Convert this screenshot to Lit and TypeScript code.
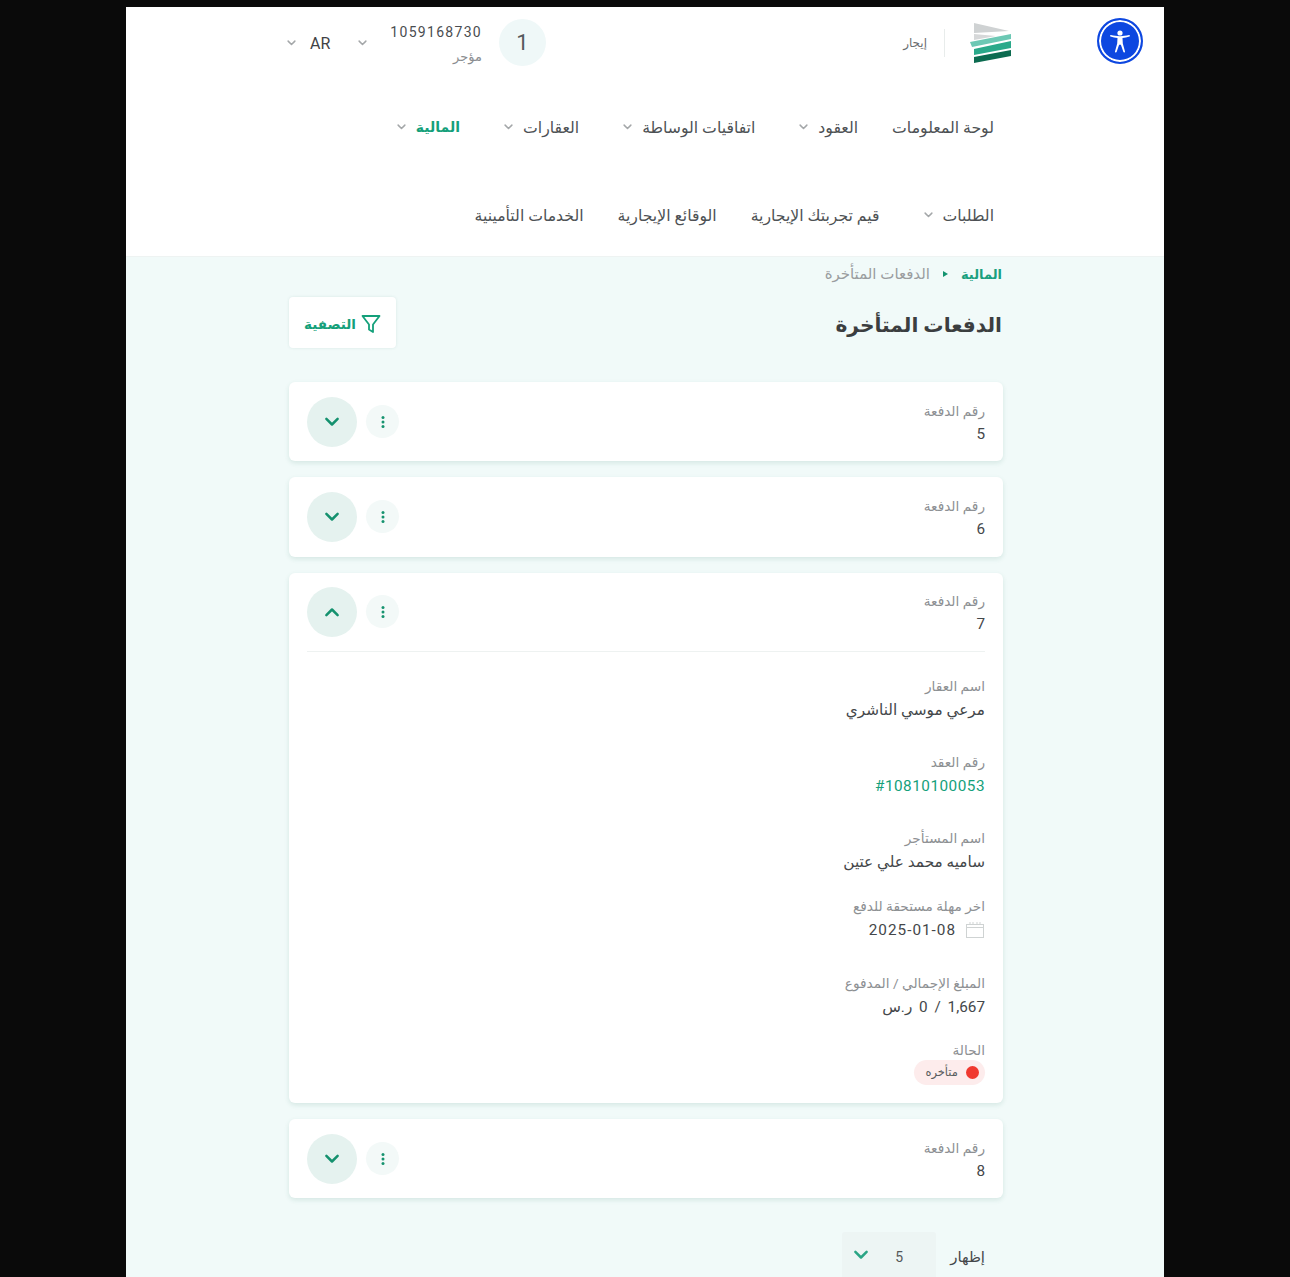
import { LitElement, html, css, svg } from "lit";
import { customElement } from "lit/decorators.js";

const chev = (cls: string) => html`<svg class=${cls} viewBox="0 0 12 8" fill="none"><path d="M1.5 1.5 6 6l4.5-4.5" stroke="currentColor" stroke-width="2" stroke-linecap="round" stroke-linejoin="round"/></svg>`;

const kebab = html`<span class="kebab"><svg width="4" height="14" viewBox="0 0 4 14"><circle cx="2" cy="2.500" r="1.500"/><circle cx="2" cy="7" r="1.500"/><circle cx="2" cy="11.500" r="1.500"/></svg></span>`;

@customElement("app-root")
export class AppRoot extends LitElement {
  static styles = css`
    :host { display: block; background: #0a0a0a; height: 1277px; overflow: hidden; font-family: Roboto, "DejaVu Sans", sans-serif; color: #3c4043; }
    * { box-sizing: border-box; }
    .page { position: relative; width: 1038px; margin: 0 auto; padding-top: 7px; direction: rtl; }
    header { background: #fff; height: 250px; border-bottom: 1px solid #eef3f2; }
    .top { height: 71px; padding: 0 153px 0 161px; display: flex; align-items: center; }
    .logo { width: 41px; height: 40px; }
    .sep { width: 1px; height: 28px; background: #e8eceb; margin: 0 25px 0 17px; }
    .brand { font-size: 12px; color: #6a6d70; }
    .spacer { flex: 1; }
    .avatar { width: 47px; height: 47px; border-radius: 50%; background: #eff8f8; display: flex; align-items: center; justify-content: center; font-size: 22px; color: #55595c; margin-left: 17px; }
    .user { display: flex; flex-direction: column; gap: 9px; padding-top: 4px; }
    .user b { font-weight: 400; font-size: 14px; line-height: 15px; letter-spacing: 1.300px; color: #4a4d50; direction: ltr; }
    .user span { font-size: 13px; line-height: 15px; color: #8a8d90; }
    .c-s { width: 9px; height: 6px; color: #a4a7a9; display: block; }
    .usr-chev { margin-right: 23px; }
    .lang { font-size: 16px; color: #3f4245; margin: 2px 28px 0 0; }
    .lang-chev { margin-right: 14px; }
    .accessibility { position: absolute; top: 18px; right: 21px; width: 46px; height: 46px; border-radius: 50%; background: #0d47e0; border: 2px solid #0d47e0; box-shadow: inset 0 0 0 2px #fff; display: flex; align-items: center; justify-content: center; }
    nav { padding: 0 170px 0 0; }
    .nav-row { height: 88px; display: flex; align-items: center; gap: 34px; }
    .nav-row.first { margin-top: 5px; }
    .item { display: flex; align-items: center; gap: 10px; font-size: 15.700px; color: #4d5154; }
    .item .c-s { margin-left: 10px; }
    .item.on { color: #14a07a; font-weight: 700; font-size: 14px; }
    main { background: #f1faf9; height: 1020px; padding: 0 161px 0 163px; }
    .crumbs { display: flex; align-items: center; gap: 13px; font-size: 15px; height: 34px; color: #9a9d9f; padding-right: 1px; }
    .crumbs .g { color: #1ba07f; font-weight: 700; font-size: 13px; }
    .crumbs i { width: 0; height: 0; border-top: 3.500px solid transparent; border-bottom: 3.500px solid transparent; border-left: 5px solid #12936f; }
    .head { display: flex; justify-content: space-between; align-items: center; height: 51px; margin-top: 6px; }
    h1 { margin: 5px 1px 0 0; font-size: 20.200px; font-weight: 700; color: #3b3e40; }
    .filter { width: 107px; height: 51px; background: #fff; border-radius: 4px; box-shadow: 0 0 3px rgba(40,110,90,.12); display: flex; align-items: center; justify-content: center; gap: 5px; padding-top: 2px; color: #14a07a; font-weight: 700; font-size: 13.500px; }
    .cards { display: flex; flex-direction: column; gap: 16px; margin-top: 34px; }
    .card { background: #fff; border-radius: 6px; box-shadow: 0 2px 5px rgba(40,120,100,.14); padding: 0 18px; }
    .row { height: 79.300px; display: flex; justify-content: space-between; align-items: center; }
    .row.open { border-bottom: 1px solid #eef2f1; }
    .lbl { font-size: 13.700px; color: #8d9093; line-height: 16px; }
    .val { font-size: 15.300px; color: #44474a; line-height: 20px; }
    .num { display: flex; flex-direction: column; gap: 5px; padding-top: 4px; }
    .acts { display: flex; align-items: center; gap: 9px; }
    .kebab { width: 33px; height: 33px; border-radius: 50%; background: #f3f9f8; display: flex; align-items: center; justify-content: center; fill: #16936f; }
    .toggle { width: 50px; height: 50px; border-radius: 50%; background: #e5f2ef; display: flex; align-items: center; justify-content: center; color: #14916e; }
    .c-t { width: 16px; height: 10px; display: block; }
    .up { transform: rotate(180deg); }
    .fields { padding-top: 26px; height: 451px; }
    .f { display: flex; flex-direction: column; gap: 6px; align-items: flex-start; }
    .f1 { height: 76px; }
    .f2 { height: 68px; }
    .f3 { height: 77px; }
    .f4 { height: 67px; }
    .link { color: #14a07a; direction: ltr; letter-spacing: .5px; }
    .date { display: flex; align-items: center; gap: 9px; letter-spacing: 1px; }
    .amt { letter-spacing: 1px; word-spacing: 3px; }
    .badge { display: inline-flex; align-items: center; gap: 8px; height: 25px; width: 71px; padding: 0 6px; border-radius: 13px; background: #fdecec; font-size: 11.500px; color: #5b5e60; margin-top: -4px; }
    .badge i { width: 13px; height: 13px; border-radius: 50%; background: #f0392f; }
    .pager { display: flex; align-items: center; gap: 14px; margin-top: 34px; padding-right: 18px; font-size: 15px; color: #44474a; }
    .select { width: 94px; height: 50px; background: #edf5f4; border-radius: 3px; display: flex; align-items: center; justify-content: space-between; padding: 0 13px 0 11px; }
    .select span { padding-right: 20px; font-size: 14px; color: #55585a; }
    .c-p { width: 16px; height: 10px; color: #2aa585; display: block; margin-top: -4px; }
  `;

  private head(n: string, open = false) {
    return html`<div class="row ${open ? "open" : ""}">
      <div class="num"><span class="lbl">رقم الدفعة</span><span class="val">${n}</span></div>
      <div class="acts">${kebab}<span class="toggle">${chev(open ? "c-t up" : "c-t")}</span></div>
    </div>`;
  }

  render() {
    return html`<div class="page">
      <header>
        <div class="top">
          <svg class="logo" viewBox="0 0 41 40">
            ${svg`<path d="M4 0 39 8 4 10z" fill="#cfd2d3"/><path d="M4 11 26 13 4 17z" fill="#d6d8d9"/>
            <path d="M0 19 41 11v5L2 24z" fill="#6cc8b4"/><path d="M4 26 41 18v7L4 32z" fill="#2aa98a"/><path d="M4 34 41 27v6L4 40z" fill="#0c6b50"/>`}
          </svg>
          <span class="sep"></span>
          <span class="brand">إيجار</span>
          <span class="spacer"></span>
          <span class="avatar">1</span>
          <div class="user"><b>1059168730</b><span>مؤجر</span></div>
          ${chev("c-s usr-chev")}
          <span class="lang">AR</span>
          ${chev("c-s lang-chev")}
        </div>
        <nav>
          <div class="nav-row first">
            <span class="item">لوحة المعلومات</span>
            <span class="item">العقود ${chev("c-s")}</span>
            <span class="item">اتفاقيات الوساطة ${chev("c-s")}</span>
            <span class="item">العقارات ${chev("c-s")}</span>
            <span class="item on">المالية ${chev("c-s")}</span>
          </div>
          <div class="nav-row">
            <span class="item">الطلبات ${chev("c-s")}</span>
            <span class="item">قيم تجربتك الإيجارية</span>
            <span class="item">الوقائع الإيجارية</span>
            <span class="item">الخدمات التأمينية</span>
          </div>
        </nav>
      </header>
      <div class="accessibility">
        <svg width="26" height="26" viewBox="0 0 26 26" fill="#fff"><circle cx="13" cy="5" r="2.600"/><path d="M3.500 8.600c-.7-.2-.5-1.700.4-1.500 2.900.7 5.900 1.200 9.100 1.200s6.200-.5 9.100-1.200c.9-.2 1.100 1.300.4 1.500-2.400.7-4.800 1.200-7 1.400l.3 5.500 2.200 8c.2.900-1.200 1.400-1.600.5l-2.500-7.300h-1.800l-2.500 7.300c-.4.900-1.800.4-1.600-.5l2.200-8 .3-5.500c-2.200-.2-4.600-.7-7-1.400z"/></svg>
      </div>
      <main>
        <div class="crumbs"><span class="g">المالية</span><i></i><span>الدفعات المتأخرة</span></div>
        <div class="head">
          <h1>الدفعات المتأخرة</h1>
          <div class="filter">
            <svg width="20" height="20" viewBox="0 0 20 20" fill="none" stroke="#14a07a" stroke-width="1.800" stroke-linejoin="round"><path d="M1.500 2h17L12 10.500V18l-4-2.500v-5z"/></svg>
            التصفية
          </div>
        </div>
        <div class="cards">
          <section class="card">${this.head("5")}</section>
          <section class="card">${this.head("6")}</section>
          <section class="card">
            ${this.head("7", true)}
            <div class="fields">
              <div class="f f1"><span class="lbl">اسم العقار</span><span class="val">مرعي موسي الناشري</span></div>
              <div class="f f1"><span class="lbl">رقم العقد</span><span class="val link">#10810100053</span></div>
              <div class="f f2"><span class="lbl">اسم المستأجر</span><span class="val">ساميه محمد علي عتين</span></div>
              <div class="f f3"><span class="lbl">اخر مهلة مستحقة للدفع</span>
                <span class="val date">
                  <svg width="20" height="18" viewBox="0 0 20 18" fill="none" stroke="#cfd3d3"><rect x="1.500" y="3.500" width="17" height="13"/><path d="M1.500 6.500h17M5 1v2.500M8 1v2.500M12 1v2.500M15 1v2.500"/></svg>
                  2025-01-08
                </span></div>
              <div class="f f4"><span class="lbl">المبلغ الإجمالي / المدفوع</span><span class="val amt">1,667 / 0 ر.س</span></div>
              <div class="f"><span class="lbl">الحالة</span><span class="badge"><i></i>متأخره</span></div>
            </div>
          </section>
          <section class="card">${this.head("8")}</section>
        </div>
        <div class="pager">
          <span>إظهار</span>
          <div class="select"><span>5</span>${chev("c-p")}</div>
        </div>
      </main>
    </div>`;
  }
}
